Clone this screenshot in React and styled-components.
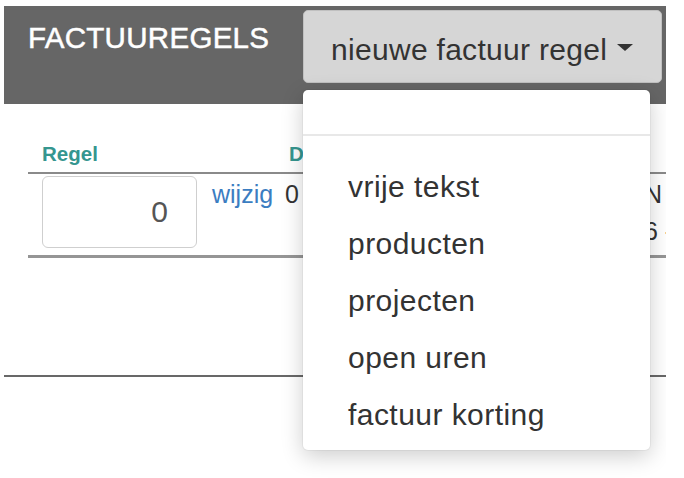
import React from 'react';
import styled, { createGlobalStyle } from 'styled-components';

const Global = createGlobalStyle`
  html, body { margin: 0; padding: 0; background: #fff; }
  body { font-family: "Liberation Sans", Arial, sans-serif; }
  * { box-sizing: border-box; }
`;

const Page = styled.div`
  margin: 6px 0 0 4px;
  width: 662px;
  height: 472px;
  overflow: hidden;
`;

const Header = styled.header`
  height: 98px;
  background: #666;
  display: flex;
  align-items: flex-start;
  padding-left: 24px;
`;

const Title = styled.h2`
  margin: 0;
  flex: 0 0 275px;
  padding-top: 17px;
  font-size: 29.5px;
  line-height: 29px;
  font-weight: 400;
  color: #fff;
  letter-spacing: 0.3px;
  -webkit-text-stroke: 0.5px #fff;
`;

const ButtonGroup = styled.div`
  position: relative;
  margin-top: 4px;
`;

const Button = styled.button`
  width: 359px;
  height: 73px;
  background: #d6d6d6;
  border: 1px solid #c0c0c0;
  border-radius: 5px;
  font-family: "Liberation Sans", Arial, sans-serif;
  font-size: 30px;
  letter-spacing: 0.3px;
  color: #333;
  display: flex;
  align-items: center;
  gap: 10px;
  padding: 6px 0 0 27px;
  cursor: pointer;
`;

const Caret = styled.span`
  width: 0;
  height: 0;
  border-top: 7px solid #333;
  border-left: 8px solid transparent;
  border-right: 8px solid transparent;
  margin-top: -4px;
`;

const Menu = styled.ul`
  position: absolute;
  top: 80px;
  left: 0;
  width: 347px;
  height: 360px;
  margin: 0;
  padding: 0;
  list-style: none;
  background: #fff;
  border-radius: 5px;
  box-shadow: 0 6px 22px rgba(0, 0, 0, 0.2), 0 0 0 1px rgba(0, 0, 0, 0.04);
  z-index: 10;
`;

const EmptyItem = styled.li`
  height: 44px;
`;

const MenuDivider = styled.li`
  height: 2px;
  background: #e8e8e8;
  margin-bottom: 22px;
`;

const MenuItem = styled.li`
  height: 57px;
  line-height: 57px;
  padding-left: 45px;
  font-size: 30px;
  letter-spacing: 0.45px;
  color: #333;
  white-space: nowrap;
`;

const Content = styled.section`
  padding-left: 24px;
`;

const Row = styled.div`
  display: grid;
  grid-template-columns: 176px 79px 361px 1fr;
`;

const HeadRow = styled(Row)`
  margin-top: 38px;
  padding-bottom: 6px;
  border-bottom: 2px solid #8a8a8a;
`;

const BodyRow = styled(Row)`
  padding: 2px 0 5px;
  border-bottom: 3px solid #959595;
`;

const Th = styled.div`
  font-size: 20.5px;
  line-height: 24px;
  font-weight: 700;
  color: #35968f;
  padding-left: ${p => p.$pad || 0}px;
  white-space: nowrap;
`;

const Td = styled.div`
  font-size: 25px;
  line-height: 37px;
  color: #333;
  padding-left: ${p => p.$pad || 0}px;
  white-space: nowrap;
  overflow: hidden;
`;

const NumberInput = styled.input`
  display: block;
  margin-left: 14px;
  width: 155px;
  height: 72px;
  border: 1px solid #cfcfcf;
  border-radius: 6px;
  padding: 0 28px 0 0;
  text-align: right;
  font-family: "Liberation Sans", Arial, sans-serif;
  font-size: 30px;
  color: #555;
  background: #fff;
  outline: none;
`;

const EditLink = styled.a`
  color: #3b7dc1;
  text-decoration: none;
`;

const BottomRule = styled.hr`
  margin: 117px 0 0;
  border: 0;
  border-top: 2px solid #686868;
`;

const items = ['vrije tekst', 'producten', 'projecten', 'open uren', 'factuur korting'];

export default function App() {
  return (
    <>
      <Global />
      <Page>
        <Header>
          <Title>FACTUUREGELS</Title>
          <ButtonGroup>
            <Button type="button">
              nieuwe factuur regel <Caret />
            </Button>
            <Menu>
              <EmptyItem />
              <MenuDivider />
              {items.map(t => (
                <MenuItem key={t}>{t}</MenuItem>
              ))}
            </Menu>
          </ButtonGroup>
        </Header>
        <Content>
          <HeadRow>
            <Th $pad={14}>Regel</Th>
            <Th />
            <Th $pad={6}>Datum</Th>
            <Th />
          </HeadRow>
          <BodyRow>
            <div>
              <NumberInput readOnly defaultValue="0" />
            </div>
            <Td $pad={8}>
              <EditLink href="#">wijzig</EditLink>
            </Td>
            <Td $pad={2}>0</Td>
            <Td>
              N
              <br />6 -
            </Td>
          </BodyRow>
        </Content>
        <BottomRule />
      </Page>
    </>
  );
}
